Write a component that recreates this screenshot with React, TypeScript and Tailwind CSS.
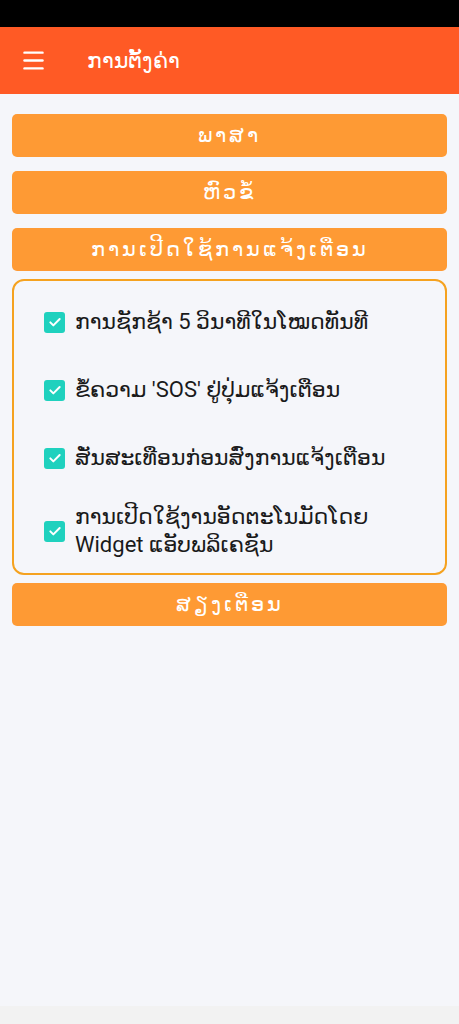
import { Menu } from 'lucide-react';

const FONT = { fontFamily: '"DejaVu Sans", "Noto Sans", sans-serif' };
const ITEM_FONT = { fontFamily: 'Roboto, "DejaVu Sans", "Noto Sans", sans-serif' };

function OrangeButton({ label }: { label: string }) {
  return (
    <button className="w-full h-[43px] rounded-[5px] bg-[#fe9a34] text-white text-[21px] tracking-[3px] font-light flex items-center justify-center">
      {label}
    </button>
  );
}

function CheckItem({ label, className = '' }: { label: React.ReactNode; className?: string }) {
  return (
    <div className={`flex items-center gap-[10px] ${className}`}>
      <div className="w-[21px] h-[21px] shrink-0 rounded-[3px] bg-[#1fd1be] flex items-center justify-center">
        <svg viewBox="0 0 24 24" className="w-[16px] h-[16px]" fill="none" stroke="white" strokeWidth={3} strokeLinecap="round" strokeLinejoin="round">
          <path d="M5 12.5l4.5 4.5L19 7.5" />
        </svg>
      </div>
      <div className="text-[22px] leading-[28px] text-[#1a1a1a] whitespace-nowrap" style={ITEM_FONT}>{label}</div>
    </div>
  );
}

export default function App() {
  return (
    <div className="w-[459px] h-[1024px] bg-[#f5f6fa] flex flex-col" style={FONT}>
      <div className="h-[27px] bg-black shrink-0" />
      <div className="h-[67px] bg-[#ff5a25] flex items-center shrink-0">
        <Menu className="ml-[20px] w-[27px] h-[27px] text-white" strokeWidth={2.2} />
        <span className="ml-[40px] text-white text-[22px] font-light">ການຕັ້ງຄ່າ</span>
      </div>
      <div className="flex-1 px-[12px] pt-[20px] flex flex-col gap-[14px]">
        <OrangeButton label="ພາສາ" />
        <OrangeButton label="ຫົວຂໍ້" />
        <div className="flex flex-col gap-[8px]">
          <OrangeButton label="ການເປີດໃຊ້ການແຈ້ງເຕືອນ" />
          <div className="h-[296px] rounded-[12px] border-2 border-[#f5a21f] pl-[30px] pr-[12px] pt-[27px] flex flex-col gap-[40px]">
            <CheckItem label="ການຊັກຊ້າ 5 ວິນາທີໃນໂໝດທັນທີ" />
            <CheckItem label="ຂໍ້ຄວາມ 'SOS' ຢູ່ປຸ່ມແຈ້ງເຕືອນ" />
            <CheckItem label="ສັ່ນສະເທືອນກ່ອນສົ່ງການແຈ້ງເຕືອນ" />
            <CheckItem className="-mt-[9px]" label={<>ການເປີດໃຊ້ງານອັດຕະໂນມັດໂດຍ<br />Widget ແອັບພລິເຄຊັນ</>} />
          </div>
          <OrangeButton label="ສຽງເຕືອນ" />
        </div>
      </div>
      <div className="h-[18px] bg-[#f2f2f2] shrink-0" />
    </div>
  );
}
